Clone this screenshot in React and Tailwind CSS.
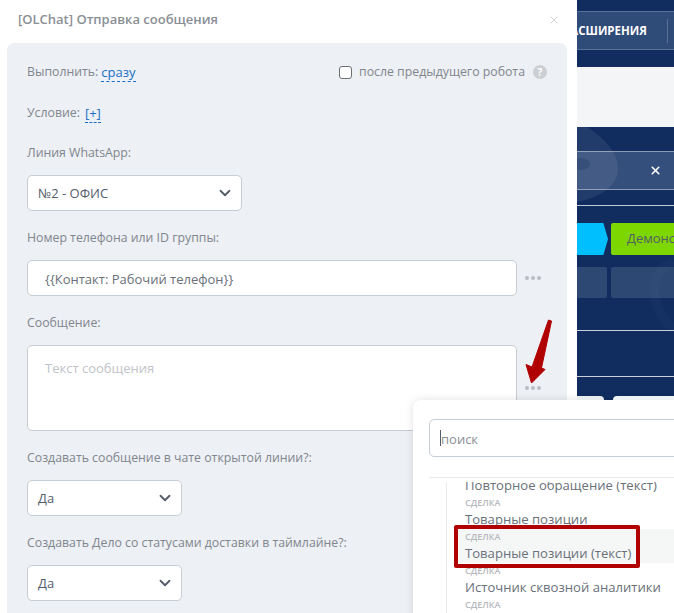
import React from 'react';
import { ChevronDown, X } from 'lucide-react';

const Label = ({ children, className = '' }) => (
  <div className={`h-[18px] pt-[1px] text-[12.3px] leading-[18px] text-[#80868e] ${className}`}>{children}</div>
);

const FakeSelect = ({ value, width }) => (
  <div className={`${width} h-[36px] bg-white border border-[#c6cdd3] rounded-[5px] flex items-center justify-between pl-[10px] pr-[7px] text-[13px] text-[#535c69]`}>
    <span className="pt-[2px]">{value}</span>
    <ChevronDown size={18} strokeWidth={2.4} className="text-[#535c69]" />
  </div>
);

const Dots = () => (
  <div className="flex gap-[2px] ml-[8px]">
    <span className="w-[4px] h-[4px] rounded-full bg-[#b9bdc3]" />
    <span className="w-[4px] h-[4px] rounded-full bg-[#b9bdc3]" />
    <span className="w-[4px] h-[4px] rounded-full bg-[#b9bdc3]" />
  </div>
);

const ListRow = ({ title, active, className = '' }) => (
  <div className={`h-[34px] pl-[10px] ${active ? 'bg-[#f5f7f7]' : ''} ${className}`}>
    <div className="text-[9px] leading-[14px] font-semibold text-[#b5b9be] pt-[1px]">СДЕЛКА</div>
    <div className="text-[13.1px] leading-[18px] text-[#6a7079] whitespace-nowrap">{title}</div>
  </div>
);

const Modal = () => (
  <div className="w-[577px] h-[613px] shrink-0 bg-white rounded-tr-[8px] flex flex-col pl-[7px] pr-[10px]">
    <div className="h-[43px] shrink-0 flex items-center justify-between pl-[11px] pr-[7px] pb-[4px]">
      <span className="text-[13px] font-semibold text-[#8a8f96]">[OLChat] Отправка сообщения</span>
      <X size={12} strokeWidth={2} className="text-[#d0d2d5]" />
    </div>
    <div className="flex-1 bg-[#edf0f4] rounded-t-[7px] pl-[20px] pr-[20px] pt-[20px]">
      <div className="flex items-center justify-between h-[18px]">
        <div className="flex items-center text-[12.3px] text-[#80868e]">
          Выполнить:
          <span className="ml-[3px] text-[13px] text-[#1a6fc4] border-b border-dashed border-[#1a6fc4] leading-[18px]">сразу</span>
        </div>
        <div className="flex items-center text-[12.3px] text-[#80868e]">
          <input type="checkbox" className="appearance-none w-[13px] h-[13px] bg-white border border-[#6b7076] rounded-[3px] mr-[7px]" />
          после предыдущего робота
          <span className="ml-[8px] w-[14px] h-[14px] rounded-full bg-[#ccd0d4] text-white text-[10px] font-bold flex items-center justify-center">?</span>
        </div>
      </div>
      <div className="flex items-center text-[12.3px] text-[#80868e] mt-[23px] h-[18px]">
        Условие:
        <span className="ml-[5px] text-[13px] text-[#1a6fc4] border-b border-dashed border-[#1a6fc4] leading-[18px]">[+]</span>
      </div>
      <Label className="mt-[21px]">Линия WhatsApp:</Label>
      <div className="mt-[14px]"><FakeSelect value="№2 - ОФИС" width="w-[215px]" /></div>
      <Label className="mt-[17px]">Номер телефона или ID группы:</Label>
      <div className="mt-[14px] flex items-center">
        <input
          readOnly
          value="{{Контакт: Рабочий телефон}}"
          className="w-[490px] h-[36px] bg-white border border-[#c6cdd3] rounded-[5px] pl-[17px] pt-[2px] text-[13px] text-[#6a7079] outline-none"
        />
        <Dots />
      </div>
      <Label className="mt-[17px]">Сообщение:</Label>
      <div className="mt-[14px] flex items-end">
        <textarea
          readOnly
          placeholder="Текст сообщения"
          className="w-[490px] h-[86px] bg-white border border-[#c6cdd3] rounded-[5px] pl-[17px] pt-[13px] text-[13px] text-[#6a7079] placeholder:text-[#c0c4c9] outline-none resize-none"
        />
        <div className="pb-[41px]"><Dots /></div>
      </div>
      <Label className="mt-[17px]">Создавать сообщение в чате открытой линии?:</Label>
      <div className="mt-[14px]"><FakeSelect value="Да" width="w-[155px]" /></div>
      <Label className="mt-[17px]">Создавать Дело со статусами доставки в таймлайне?:</Label>
      <div className="mt-[14px]"><FakeSelect value="Да" width="w-[155px]" /></div>
    </div>
  </div>
);

const Background = () => (
  <div className="relative flex-1 h-[613px] bg-[#112d60] overflow-hidden flex flex-col">
    <div className="mt-[11px] h-[39px] shrink-0 border-y border-[#5a7197] bg-[#2f4b78] flex items-center whitespace-nowrap">
      <span className="ml-[-14px] w-[80px] shrink-0 text-[11.5px] font-bold text-white">РАСШИРЕНИЯ</span>
      <span className="ml-[24px] w-px h-[24px] shrink-0 bg-[#5a7197]" />
    </div>
    <div className="mt-[17px] h-[60px] shrink-0 bg-[#f4f5f7]" />
    <div className="mt-[24px] h-[39px] shrink-0 border-y border-[#8b9ab5] bg-[#354f7c] flex items-center justify-end pr-[12px]">
      <X size={13} strokeWidth={3} className="text-white" />
    </div>
    <div className="mt-[15px] h-px shrink-0 bg-[#c3cad6]" />
    <div className="mt-[17px] flex gap-[3px] shrink-0 whitespace-nowrap">
      <div className="w-[31px] h-[32px] shrink-0 bg-[#00bfff] [clip-path:polygon(0_0,85%_0,100%_50%,85%_100%,0_100%)]" />
      <div className="w-[80px] h-[32px] shrink-0 rounded-[2px] bg-[#7ed600] pl-[16px] flex items-center text-[13px] text-[#535c69] overflow-hidden">Демонстрация</div>
    </div>
    <div className="mt-[12px] flex gap-[4px] shrink-0">
      <div className="w-[30px] h-[31px] shrink-0 rounded-r-[2px] bg-[#2c4873]" />
      <div className="w-[70px] h-[31px] shrink-0 rounded-l-[2px] bg-[#2c4873]" />
    </div>
    <div className="mt-[32px] h-px shrink-0 bg-[#c9ced8]" />
    <div className="mt-[45px] h-px shrink-0 bg-[#c9ced8]" />
    {/* faint swirl from the wallpaper */}
    <svg className="absolute left-0 top-0 pointer-events-none" width="97" height="340" viewBox="0 0 97 340">
      <path d="M10 127 C30 140 42 155 41 170 C40 188 20 198 0 202 L0 127 Z" fill="#ffffff" opacity="0.07" />
      <ellipse cx="4" cy="164" rx="9" ry="6" fill="#112d60" opacity="0.25" />
      <path d="M97 262 C82 266 76 280 78 296 C80 310 88 322 97 330" fill="none" stroke="#ffffff" strokeWidth="10" opacity="0.02" />
    </svg>
  </div>
);

const Popup = () => (
  <div className="absolute left-[413px] top-[400px] w-[320px] h-[260px] bg-white rounded-t-[8px] shadow-[0_0_10px_rgba(0,0,0,0.12)] pl-[16px] pt-[19px]">
    <div className="h-[38px] border border-[#c6cdd3] rounded-[5px] flex items-center pl-[10px] text-[13px] text-[#8a8f96]">
      <span className="w-px h-[16px] bg-[#535c69]" />
      <span className="pt-[3px]">поиск</span>
    </div>
    <div className="mt-[20px] border-t border-[#e9ebee] pt-[4px]">
      <div className="ml-[17px] border-l border-[#e9ebee] h-[140px] overflow-hidden pl-[8px]">
        <ListRow title="Повторное обращение (текст)" className="mt-[-21px]" />
        <ListRow title="Товарные позиции" />
        <ListRow title="Товарные позиции (текст)" active />
        <ListRow title="Источник сквозной аналитики" />
        <ListRow title="Ответственный" />
      </div>
    </div>
    <div className="absolute left-[41px] top-[125px] w-[186px] h-[43px] border-4 border-[#b00000] rounded-[2px]" />
  </div>
);

export default function App() {
  return (
    <div className="relative w-[674px] h-[613px] overflow-hidden flex font-['Open_Sans',sans-serif]">
      <Modal />
      <Background />
      <Popup />
      {/* tail of the popup with the dark notch */}
      <div className="absolute left-[577px] top-[396px] w-[27px] h-[4px] bg-[#e9ecef] rounded-tr-[4px]" />
      <div className="absolute left-[613px] top-[396px] w-[61px] h-[4px] bg-[#eef4f6] rounded-tl-[4px]" />
      <svg className="absolute left-[520px] top-[315px]" width="40" height="75" viewBox="0 0 40 75">
        <path d="M28.5 5 L31.5 6 L21.5 53 L25 54.5 L11.5 68 L6 49.5 L12 52 Z" fill="#b00000" stroke="#b00000" strokeLinejoin="round" />
      </svg>
    </div>
  );
}
